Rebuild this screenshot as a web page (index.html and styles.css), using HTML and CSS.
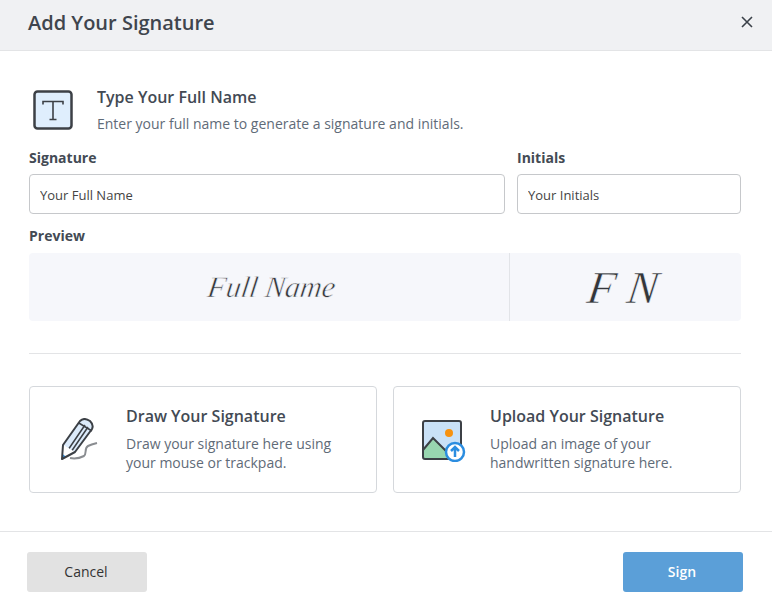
FILE: index.html
```html
<!DOCTYPE html>
<html lang="en">
  <head>
    <meta charset="UTF-8" />
    <meta name="viewport" content="width=device-width, initial-scale=1.0" />
    <title>Add Your Signature</title>
    <link rel="stylesheet" href="styles.css">
  </head>
  <body>
    <div class="modal">
      <div class="modal-header">
        <h1>Add Your Signature</h1>
        <svg class="close-icon" width="12" height="12" viewBox="0 0 12 12">
          <path d="M1 1l10 10M11 1L1 11" />
        </svg>
      </div>

      <div class="modal-body">
        <div class="type-row">
          <svg class="type-icon" width="40" height="40" viewBox="0 0 40 40">
            <rect class="type-box" x="1.5" y="1.5" width="37" height="37" rx="3" />
            <path class="type-letter" d="M10 14.500v-3h20v3M20 11.500v18M16.500 29.500h7" />
          </svg>
          <div>
            <h2>Type Your Full Name</h2>
            <p>Enter your full name to generate a signature and initials.</p>
          </div>
        </div>

        <div class="fields">
          <div>
            <label class="field-label" for="full-name">Signature</label>
            <input id="full-name" class="text-input" type="text" placeholder="Your Full Name" />
          </div>
          <div>
            <label class="field-label" for="initials">Initials</label>
            <input id="initials" class="text-input" type="text" placeholder="Your Initials" />
          </div>
        </div>

        <div class="field-label preview-label">Preview</div>
        <div class="preview">
          <div class="preview-name"><span>Full Name</span></div>
          <div class="preview-initials"><span>F N</span></div>
        </div>

        <hr class="divider" />

        <div class="options">
          <div class="option">
            <svg class="option-icon" width="44" height="44" viewBox="0 0 44 44">
              <path class="squiggle" d="M12 40c5 1 10 0 14-2 3-2 0-8 4-10 2-1 5-2 9-3" />
              <path class="pencil-fill" d="M5 27L22 3c3-3 7-2 10 0 3 3 3 6 2 8L17 34z" />
              <path class="pencil-line" d="M11 30.500L27 7M14 32.500L30 9M20 4.500l14 8.500" />
              <path class="pencil-tip" d="M5 27l-1 14 13-7z" />
              <path class="pencil-lead" d="M4 41l0.500-5 4 3z" />
              <path class="pencil-outline" d="M5 27L22 3c3-3 7-2 10 0 3 3 3 6 2 8L17 34l-13 7z" />
            </svg>
            <div>
              <h2>Draw Your Signature</h2>
              <p>Draw your signature here using your mouse or trackpad.</p>
            </div>
          </div>
          <div class="option">
            <svg class="option-icon" width="44" height="44" viewBox="0 0 44 44">
              <rect class="sky" x="1" y="3" width="38" height="38" rx="2" />
              <path class="hill" d="M1 32l10-12 11 11 5-4 12 10v4H1z" />
              <path class="hill-line" d="M1 32l10-12 15 15" />
              <rect class="photo-frame" x="1" y="3" width="38" height="38" rx="2" />
              <circle class="sun" cx="27" cy="15" r="4" />
              <circle class="badge" cx="33" cy="34" r="9" />
              <path class="badge-arrow" d="M33 39v-10M29 33l4-4 4 4" />
            </svg>
            <div>
              <h2>Upload Your Signature</h2>
              <p>Upload an image of your handwritten signature here.</p>
            </div>
          </div>
        </div>
      </div>

      <div class="modal-footer">
        <button class="btn btn-cancel">Cancel</button>
        <button class="btn btn-sign">Sign</button>
      </div>
    </div>
  </body>
</html>
```

FILE: styles.css
```css
body {
  margin: 0;
  background: #fff;
  font-family: "Open Sans", Arial, sans-serif;
  color: #3e4650;
}
.modal {
  width: 772px;
  height: 609px;
  overflow: hidden;
}
.modal-header {
  box-sizing: content-box;
  height: 44px;
  padding: 0 19px 6px 28px;
  display: flex;
  align-items: center;
  justify-content: space-between;
  background: #f0f1f3;
  border-bottom: 1px solid #e3e4e6;
}
h1 {
  margin: 0;
  font-size: 20px;
  font-weight: 600;
  color: #3f454d;
}
.close-icon path {
  fill: none;
  stroke: #3b4149;
  stroke-width: 1.6;
}
.modal-body {
  padding: 35px 31px 38px 29px;
  border-bottom: 1px solid #e3e4e6;
}
h2 {
  margin: 0;
  font-size: 16px;
  line-height: 22px;
  font-weight: 600;
  color: #434a54;
}
p {
  margin: 0;
  font-size: 14px;
  line-height: 19px;
  color: #5f6b78;
}
.type-row {
  display: flex;
  align-items: flex-start;
  gap: 24px;
  padding-left: 4px;
}
.type-icon {
  margin-top: 4px;
}
.type-row p {
  margin-top: 6px;
}
.type-box {
  fill: #dfeefd;
  stroke: #3c4046;
  stroke-width: 2.5;
}
.type-letter {
  fill: none;
  stroke: #3c4046;
  stroke-width: 1.6;
}
.fields {
  display: grid;
  grid-template-columns: 476px 224px;
  gap: 12px;
  margin-top: 15px;
}
.field-label {
  display: block;
  font-size: 14px;
  line-height: 19px;
  font-weight: 700;
  color: #434a54;
}
.text-input {
  display: block;
  box-sizing: border-box;
  width: 100%;
  height: 40px;
  margin-top: 7px;
  padding: 2px 10px 0;
  border: 1px solid #c6c8cb;
  border-radius: 4px;
  font-family: inherit;
  font-size: 13px;
  color: #444;
}
.text-input::placeholder {
  color: #444;
  opacity: 1;
}
.preview-label {
  margin-top: 12px;
}
.preview {
  display: flex;
  height: 68px;
  margin-top: 8px;
  background: #f6f7fb;
  border-radius: 4px;
  font-family: "Liberation Serif", serif;
  font-style: italic;
  color: #33363a;
}
/* thin the glyphs with a background coloured stroke, closer to a pen line */
.preview span {
  display: inline-block;
  -webkit-text-stroke: 0.6px #f6f7fb;
  transform: skewX(-8deg);
}
.preview-name {
  flex: 0 0 481px;
  display: flex;
  align-items: center;
  justify-content: center;
  border-right: 1px solid #e2e4e8;
  font-size: 30px;
  box-sizing: border-box;
  padding-left: 6px;
}
.preview-initials {
  flex: 1;
  display: flex;
  align-items: center;
  justify-content: center;
  font-size: 46px;
  padding-right: 4px;
}
.divider {
  margin: 32px 0;
  border: 0;
  border-top: 1px solid #e3e4e6;
}
.options {
  display: grid;
  grid-template-columns: 348px 348px;
  gap: 16px;
}
.option {
  display: flex;
  align-items: center;
  gap: 24px;
  box-sizing: border-box;
  height: 107px;
  padding: 0 16px 0 28px;
  border: 1px solid #d5d8dc;
  border-radius: 4px;
}
.option-icon {
  flex: none;
}
.option p {
  margin-top: 7px;
  margin-bottom: 2px;
}
.squiggle {
  fill: none;
  stroke: #8a8d91;
  stroke-width: 2;
}
.pencil-fill {
  fill: #dcebfb;
}
.pencil-line {
  fill: none;
  stroke: #3c4046;
  stroke-width: 1.5;
}
.pencil-tip {
  fill: #fff;
}
.pencil-lead {
  fill: #2f8fe0;
}
.pencil-outline {
  fill: none;
  stroke: #3c4046;
  stroke-width: 2;
  stroke-linejoin: round;
}
.sky {
  fill: #c9e1f7;
}
.hill {
  fill: #98d6b0;
}
.hill-line {
  fill: none;
  stroke: #3c4046;
  stroke-width: 2;
}
.photo-frame {
  fill: none;
  stroke: #3c4046;
  stroke-width: 2;
}
.sun {
  fill: #f7920f;
}
.badge {
  fill: #fff;
  stroke: #2b8de0;
  stroke-width: 2.5;
}
.badge-arrow {
  fill: none;
  stroke: #2b8de0;
  stroke-width: 2.5;
}
.modal-footer {
  display: flex;
  justify-content: space-between;
  padding: 20px 29px 0 27px;
}
.btn {
  width: 120px;
  height: 40px;
  border: 0;
  border-radius: 3px;
  font-family: inherit;
  font-size: 14px;
  padding: 0 2px 2px 0;
}
.btn-cancel {
  background: #e2e2e2;
  color: #333;
}
.btn-sign {
  background: #5b9fd8;
  color: #fff;
  font-weight: 600;
}
```
